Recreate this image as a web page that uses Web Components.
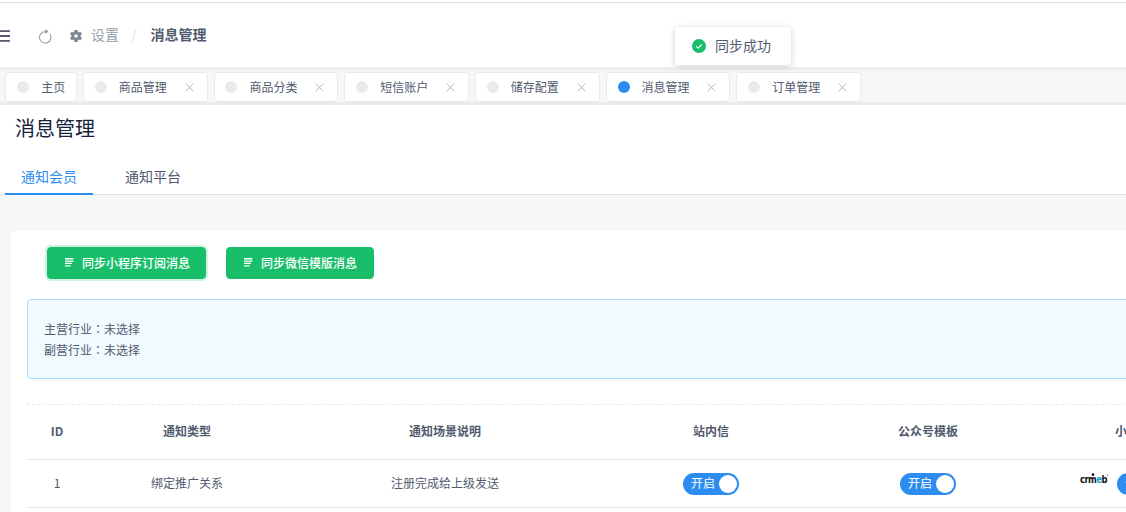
<!DOCTYPE html>
<html lang="zh">
<head>
<meta charset="utf-8">
<title>消息管理</title>
<style>
html,body{margin:0;padding:0;width:1126px;height:512px;overflow:hidden;background:#f5f7f9;}
body{font-family:"Noto Sans CJK SC","Liberation Sans",sans-serif;font-size:12px;color:#515a6e;}
</style>
</head>
<body>
<msg-app></msg-app>
<script>
const FONT='"Noto Sans CJK SC","Liberation Sans",sans-serif';
function def(name,html,setup){
  customElements.define(name,class extends HTMLElement{
    constructor(){super();this.attachShadow({mode:'open'}).innerHTML=html;}
    connectedCallback(){if(setup)setup(this);}
  });
}
def('top-bar',`<style>
:host{display:flex;align-items:center;height:64px;background:#fff;border-top:1px solid #e0e0e0;font-size:14px;line-height:20px}
svg{display:block;flex:none;margin-top:2px}
.menu{margin-right:28px}
.reload{margin-right:18px}
.gear{margin-right:9px}
span{margin-bottom:2px}
.crumb{color:#97a0ae}
.sep{color:#dcdee2;margin:0 14px 2px 12px;}
.cur{font-weight:700;color:#515a6e}
</style>
<svg class="menu" width="10" height="12" viewBox="0 0 10 12"><path d="M0 1.2h10M0 6h10M0 10.8h10" stroke="#515a6e" stroke-width="1.8" fill="none"/></svg>
<svg class="reload" width="14" height="15" viewBox="0 0 14 15"><path d="M7 2.6A5.7 5.7 0 1 0 12 5.2" stroke="#9a9ea6" stroke-width="1.1" fill="none"/><path d="M7.2 0l3.4 2.6L7.2 5.1z" fill="#9a9ea6"/></svg>
<svg class="gear" width="12" height="12" viewBox="2 2 20 20"><path fill="#808690" d="M19.4 13a7.5 7.5 0 0 0 0-2l2.1-1.6a.5.5 0 0 0 .1-.7l-2-3.4a.5.5 0 0 0-.6-.2l-2.5 1a7.3 7.3 0 0 0-1.7-1l-.4-2.7a.5.5 0 0 0-.5-.4h-4a.5.5 0 0 0-.5.4l-.4 2.7a7.3 7.3 0 0 0-1.7 1l-2.5-1a.5.5 0 0 0-.6.2l-2 3.4a.5.5 0 0 0 .1.7L4.6 11a7.5 7.5 0 0 0 0 2l-2.1 1.6a.5.5 0 0 0-.1.7l2 3.4c.1.2.4.3.6.2l2.5-1c.5.4 1.1.7 1.7 1l.4 2.7c0 .2.2.4.5.4h4c.3 0 .5-.2.5-.4l.4-2.7c.6-.3 1.2-.6 1.7-1l2.5 1c.2.1.5 0 .6-.2l2-3.4a.5.5 0 0 0-.1-.7zM12 15a3 3 0 1 1 0-6 3 3 0 0 1 0 6z"/></svg>
<span class="crumb">设置</span><span class="sep">/</span><span class="cur">消息管理</span>`);

def('tab-chip',`<style>
:host{display:flex;align-items:center;width:124.7px;height:30px;box-sizing:border-box;background:#fff;border:1px solid #e8eaec;border-radius:3px;padding:0 0 0 10.8px;font-size:12px;color:#515a6e;flex:none}
.dot{width:12px;height:12px;border-radius:50%;background:#e8eaec;margin-right:12px;flex:none}
:host([active]) .dot{background:#2d8cf0}
.t{margin-bottom:2px}
.x{margin-left:auto;width:9px;height:9px;margin-right:13px;display:block}
:host([plain]) .x{display:none}
:host([plain]){width:71.6px}
</style><span class="dot"></span><span class="t"><slot></slot></span>
<svg class="x" viewBox="0 0 9 9"><path d="M.7.7l7.6 7.6M8.3.7L.7 8.3" stroke="#a9adb4" stroke-width=".9" fill="none"/></svg>`);

def('tab-strip',`<style>
:host{display:flex;align-items:flex-start;gap:6px;height:38px;box-sizing:border-box;padding:5px 0 0 5.4px;background:linear-gradient(#eeeeee 0,#eeeeee 3px,#f5f7f9 5px,#f5f7f9 35px,#e9ebee 35px)}
</style><slot></slot>`);

def('page-head',`<style>
:host{display:block;background:#fff;height:90px;box-sizing:border-box;position:relative}
h1{margin:0;padding:8px 0 0 15px;font-size:20px;font-weight:400;line-height:30px;color:#17233d}
nav{display:flex;margin:16px 0 0;padding-left:5px;font-size:14px;line-height:20px;border-bottom:1px solid #dcdee2;height:35px;}
a{display:block;padding:7px 16px 7px;margin-right:16px;height:20px;}
a.on{color:#2d8cf0;border-bottom:2px solid #2d8cf0;width:56px;}
</style><h1><slot></slot></h1><nav><a class="on">通知会员</a><a>通知平台</a></nav>`);

def('sync-button',`<style>
:host{display:inline-flex;align-items:center;height:32px;box-sizing:border-box;padding:0 0 0 17px;background:#19be6b;border-radius:4px;color:#fff;font-size:12px;font-weight:500;flex:none;border:1px solid #19be6b;white-space:nowrap}
:host([focused]){box-shadow:0 0 0 2px rgba(25,190,107,.2)}
svg{margin:0 8px 1px 0;display:block;flex:none}
span{margin-bottom:2px}
</style><svg width="9" height="9" viewBox="0 0 9 9"><path d="M0 .8h8.4M0 3.1h8.4M0 5.4h7M0 7.9h5.6" stroke="#fff" stroke-width="1.4" fill="none"/></svg><span><slot></slot></span>`);

def('info-alert',`<style>
:host{display:block;box-sizing:border-box;height:80px;border:1px solid #abdcff;background:#f0faff;border-radius:4px;padding:18px 16px 0;font-size:12px;line-height:21px;color:#515a6e}
::slotted(div){white-space:nowrap}
</style><slot></slot>`);

const cols='60px 200px 316px 216px 218px 216px';
def('table-head',`<style>
:host{display:grid;grid-template-columns:${cols};height:56px;padding-bottom:2px;align-items:center;justify-items:center;border-top:1px dashed #e8eaec;border-bottom:1px solid #e8eaec;font-size:12px;font-weight:700;color:#515a6e;box-sizing:border-box;margin-top:25px}
::slotted(span){margin-bottom:2px}
</style><slot></slot>`);
def('table-row',`<style>
:host{display:grid;grid-template-columns:${cols};height:48px;align-items:center;justify-items:center;border-bottom:1px solid #e8eaec;font-size:12px;color:#515a6e;box-sizing:border-box}
::slotted(span){margin-bottom:2px}
</style><slot></slot>`);
def('on-switch',`<style>
:host{display:flex;align-items:center;justify-content:flex-end;box-sizing:border-box;width:56px;height:22px;border-radius:11px;background:#2d8cf0;padding-right:2px;position:relative;color:#fff;font-size:12px;}
span{position:absolute;left:8px;top:-1px;line-height:22px}
i{display:block;width:18px;height:18px;background:#fff;border-radius:50%}
</style><span><slot></slot></span><i></i>`);
def('brand-mark',`<style>
:host{position:absolute;left:-37px;top:1px;font:700 10px/12px "DejaVu Sans",sans-serif;letter-spacing:-.6px;color:#111;white-space:nowrap;transform:scaleX(.84);transform-origin:left}
b{color:#1a9fe8}
i{position:absolute;left:14px;top:-1px;width:3px;height:3px;border-radius:50%;background:#111}
u{position:absolute;right:-2px;top:0;width:2px;height:2px;border-radius:50%;background:#aaa}
</style>crm<b>e</b>b<i></i><u></u>`);
def('notice-toast',`<style>
:host{position:absolute;left:675px;top:27px;width:116px;height:38px;box-sizing:border-box;background:#fff;border-radius:4px;box-shadow:0 1px 6px rgba(0,0,0,.2);display:flex;align-items:center;padding-left:17px;font-size:14px;color:#515a6e;z-index:9}
svg{margin-right:9px;display:block}
span{margin-bottom:2px}
</style><svg width="14" height="14" viewBox="0 0 14 14"><circle cx="7" cy="7" r="7" fill="#19be6b"/><path d="M4.2 7.2l2 1.9 3.6-3.8" stroke="#fff" stroke-width="1.1" fill="none"/></svg><span><slot></slot></span>`);

def('msg-app',`<style>
:host{display:block;position:relative;width:1126px;height:512px;overflow:hidden;background:#f5f7f9;font-family:${FONT};color:#515a6e}
.gap{height:2px;background:#fff}
main{width:1300px;}
.card{margin:36px 0 0 11px;background:#fff;border-radius:4px;padding:16px 16px 0;height:400px;box-sizing:border-box}
.btns{display:flex;gap:20px;padding-left:20px;margin-bottom:20px}
.btn1{width:159px}.btn2{width:148px}
.cell{position:relative}
.colon{font-family:"Noto Sans CJK TC",sans-serif}
</style>
<div class="gap"></div>
<top-bar></top-bar>
<tab-strip>
<tab-chip plain>主页</tab-chip><tab-chip>商品管理</tab-chip><tab-chip>商品分类</tab-chip><tab-chip>短信账户</tab-chip><tab-chip>储存配置</tab-chip><tab-chip active>消息管理</tab-chip><tab-chip>订单管理</tab-chip>
</tab-strip>
<main>
<page-head>消息管理</page-head>
<section class="card">
<div class="btns"><sync-button class="btn1" focused>同步小程序订阅消息</sync-button><sync-button class="btn2">同步微信模版消息</sync-button></div>
<info-alert><div>主营行业<span class="colon" lang="zh-TW">：</span>未选择</div><div>副营行业<span class="colon" lang="zh-TW">：</span>未选择</div></info-alert>
<table-head><span>ID</span><span>通知类型</span><span>通知场景说明</span><span>站内信</span><span>公众号模板</span><span>小程序订阅</span></table-head>
<table-row><span>1</span><span>绑定推广关系</span><span>注册完成给上级发送</span><on-switch>开启</on-switch><on-switch>开启</on-switch><div class="cell"><brand-mark></brand-mark><on-switch>开启</on-switch></div></table-row>
</section>
</main>
<notice-toast>同步成功</notice-toast>`);
</script>
</body>
</html>
